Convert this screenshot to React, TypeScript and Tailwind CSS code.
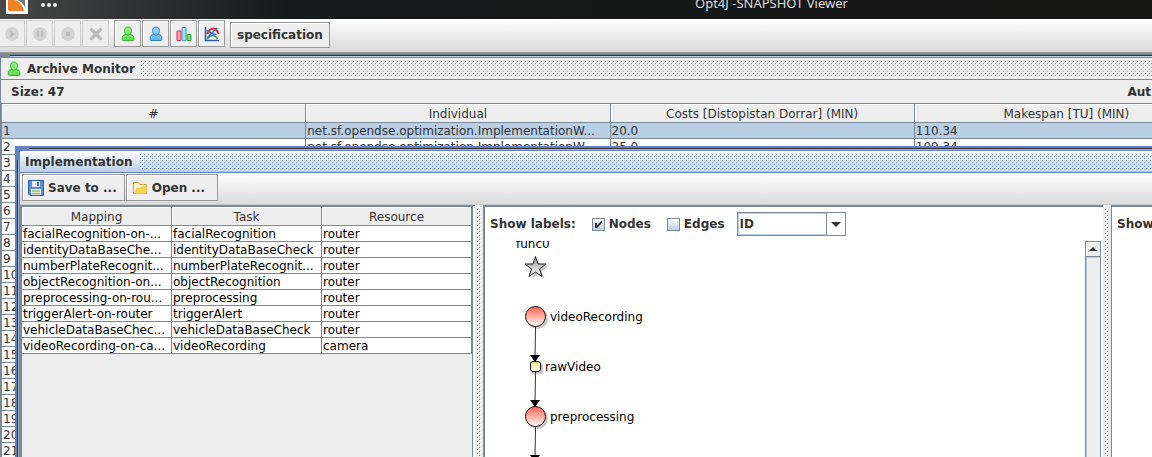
import type { ReactNode } from "react";
import { useState } from "react";

const GREY_DOTS =
  "bg-[conic-gradient(at_1px_1px,transparent_75%,#7a8a99_0),conic-gradient(at_1px_1px,transparent_75%,#7a8a99_0),conic-gradient(at_1px_1px,transparent_75%,#ffffff_0),conic-gradient(at_1px_1px,transparent_75%,#ffffff_0)] bg-[size:4px_4px] bg-[position:0_0,2px_2px,1px_1px,3px_3px]";
const BLUE_DOTS =
  "bg-[conic-gradient(at_1px_1px,transparent_75%,#6382bf_0),conic-gradient(at_1px_1px,transparent_75%,#6382bf_0),conic-gradient(at_1px_1px,transparent_75%,#ffffff_0),conic-gradient(at_1px_1px,transparent_75%,#ffffff_0)] bg-[size:4px_4px] bg-[position:0_0,2px_2px,1px_1px,3px_3px]";

function Person({ id, light, mid, dark }: { id: string; light: string; mid: string; dark: string }) {
  return (
    <svg width="14" height="16" viewBox="0 0 14 16" aria-hidden="true">
      <defs>
        <linearGradient id={id} x1="0" y1="0" x2="0" y2="1">
          <stop offset="0" stopColor={light} />
          <stop offset="1" stopColor={mid} />
        </linearGradient>
      </defs>
      <path
        d="M7 1C4.700 1 3.500 2.600 3.500 4.500C3.500 6 4.200 7.200 5 8.500C2.500 8.800 1.200 9.800 1.200 11.500V13.500Q1.200 14.500 2.200 14.500H11.800Q12.800 14.500 12.800 13.500V11.500C12.800 9.800 11.500 8.800 9 8.500C9.800 7.200 10.500 6 10.500 4.500C10.500 2.600 9.300 1 7 1Z"
        fill={`url(#${id})`}
        stroke={dark}
      />
      <path d="M5 8.500Q7 10.200 9 8.500" fill="none" stroke={dark} />
    </svg>
  );
}

function BarsIcon() {
  return (
    <svg width="16" height="16" viewBox="0 0 16 16" aria-hidden="true">
      <rect x="1" y="5" width="4" height="9.500" rx="0.500" fill="#ffa8b4" stroke="#e0203f" />
      <rect x="6" y="1.500" width="4" height="13" rx="0.500" fill="#a8e0ff" stroke="#3a98e0" />
      <rect x="11" y="8.500" width="4" height="6" rx="0.500" fill="#7be06a" stroke="#22a322" />
    </svg>
  );
}

function PlotIcon() {
  return (
    <svg width="16" height="16" viewBox="0 0 16 16" fill="none" strokeWidth="1.500" aria-hidden="true">
      <path d="M1.500 1V14.500H15" stroke="#2c5aa0" />
      <path d="M3 13C5 10.500 7 9.500 9 9.500C11 9.500 12.500 11 13.500 13" stroke="#3f9a3f" />
      <path d="M3 8C5 4 7 2.500 9.500 2.500C12 2.500 13.500 5 14.500 8" stroke="#ee2222" strokeWidth="2" />
      <path d="M2.500 4.500C6 5 8 9 12.500 8.500M3 12L13 2" stroke="#2f6fd0" />
    </svg>
  );
}

function MediaIcon({ kind }: { kind: "play" | "pause" | "stop" }) {
  return (
    <svg width="16" height="16" viewBox="0 0 16 16" aria-hidden="true">
      <circle cx="8" cy="8" r="7" fill="#d3d3d3" />
      {kind === "play" && <path d="M6.500 4.500L10.500 8L6.500 11.500Z" fill="#b9b9b9" />}
      {kind === "pause" && <path d="M5 5H7V11H5ZM9 5H11V11H9Z" fill="#bdbdbd" />}
      {kind === "stop" && <path d="M6 6H10V10H6Z" fill="#b9b9b9" />}
    </svg>
  );
}

function ToolButton({ label, disabled, children }: { label: string; disabled?: boolean; children: ReactNode }) {
  return (
    <button
      type="button"
      aria-label={label}
      disabled={disabled}
      className="flex h-[27px] w-[27px] items-center justify-center border border-[#999999] bg-[#eeeeee] shadow-[inset_1px_1px_0_#ffffff] disabled:border-[#cccccc] disabled:shadow-none"
    >
      {children}
    </button>
  );
}

function SaveIcon() {
  return (
    <svg width="16" height="16" viewBox="0 0 16 16" aria-hidden="true">
      <path d="M0.500 0.500H15.500V15.500H2L0.500 14Z" fill="#5b8ed6" stroke="#2f62ad" />
      <path d="M4 1H12V7H4Z" fill="#e6eef8" />
      <path d="M9 2H11V6H9Z" fill="#4a7cc4" />
      <path d="M3 9H13V15H3Z" fill="#ffffff" />
      <path d="M4 11H12M4 13.500H12" stroke="#7fbd6a" strokeWidth="1.500" />
    </svg>
  );
}

function FolderIcon() {
  return (
    <svg width="16" height="16" viewBox="0 0 16 16" aria-hidden="true">
      <path d="M1.500 13.500V2.500H6.500L8 4.500H14.500V13.500Z" fill="#fff4d0" stroke="#e0a04a" />
      <path d="M3.500 13.500L4.500 8.500H8L9.500 7H14.500V13.500Z" fill="#f8d84a" stroke="#eebb50" />
    </svg>
  );
}

function HeadCell({ children }: { children: ReactNode }) {
  return (
    <th className="h-[19px] overflow-hidden border-r border-b border-[#7a8a99] bg-[#eeeeee] p-0 pt-px text-center leading-4 font-normal whitespace-nowrap text-[#333333] shadow-[inset_1px_1px_0_#ffffff]">
      {children}
    </th>
  );
}

function Cell({ children }: { children?: ReactNode }) {
  return (
    <td className="h-4 overflow-hidden border-r border-b border-[#7a8a99] p-0 pt-0.5 pl-px leading-[13px] whitespace-nowrap">
      {children}
    </td>
  );
}

const INDIVIDUAL = "net.sf.opendse.optimization.ImplementationW...";
const archive = Array.from({ length: 21 }, (_, i) => ({
  n: i + 1,
  individual: i < 2 ? INDIVIDUAL : "",
  costs: ["20.0", "25.0"][i] ?? "",
  makespan: ["110.34", "109.34"][i] ?? "",
}));

const mappings = [
  ["facialRecognition-on-...", "facialRecognition", "router"],
  ["identityDataBaseChe...", "identityDataBaseCheck", "router"],
  ["numberPlateRecognit...", "numberPlateRecognit...", "router"],
  ["objectRecognition-on...", "objectRecognition", "router"],
  ["preprocessing-on-rou...", "preprocessing", "router"],
  ["triggerAlert-on-router", "triggerAlert", "router"],
  ["vehicleDataBaseChec...", "vehicleDataBaseCheck", "router"],
  ["videoRecording-on-ca...", "videoRecording", "camera"],
];

function CheckBox({ label, initial }: { label: string; initial: boolean }) {
  const [on, setOn] = useState(initial);
  return (
    <label className="flex items-center gap-1">
      <span className="relative flex">
        <input
          type="checkbox"
          checked={on}
          onChange={(e) => setOn(e.target.checked)}
          className="h-[13px] w-[13px] appearance-none border border-[#7a8a99] bg-linear-to-b from-white to-[#b8cfe5]"
        />
        {on && (
          <svg className="pointer-events-none absolute top-0 left-0" width="13" height="13" viewBox="0 0 13 13" aria-hidden="true">
            <path d="M3 5H5V7.500L9 3H10V5L5 10H3Z" fill="#333333" />
          </svg>
        )}
      </span>
      {label}
    </label>
  );
}

function Divider() {
  return (
    <div className="w-2 shrink-0 bg-[#eeeeee] px-0.5 pt-1">
      <div className={`h-full ${GREY_DOTS}`} />
    </div>
  );
}

function Graph() {
  return (
    <div className="relative min-h-0 flex-1 overflow-hidden">
      <svg className="absolute top-0 left-0" width="160" height="300" viewBox="0 0 160 300" aria-hidden="true">
        <defs>
          <linearGradient id="task" x1="0" y1="0" x2="0" y2="1">
            <stop offset="0.100" stopColor="#ff705c" />
            <stop offset="1" stopColor="#ffffff" />
          </linearGradient>
          <linearGradient id="message" x1="0" y1="0" x2="0" y2="1">
            <stop offset="0" stopColor="#f0e68c" />
            <stop offset="1" stopColor="#ffffff" />
          </linearGradient>
          <linearGradient id="star" x1="0" y1="0" x2="0" y2="1">
            <stop offset="0" stopColor="#909090" />
            <stop offset="1" stopColor="#ffffff" />
          </linearGradient>
        </defs>
        <g fill="#c8c8c8">
          <path d="M53 18L55.500 25.500H63.500L57 30.500L59.500 38L53 33.500L46.500 38L49 30.500L42.500 25.500H50.500Z" />
          <circle cx="52.500" cy="77.500" r="10.500" />
          <rect x="47" y="122" width="11" height="11" rx="2" />
          <circle cx="52.500" cy="177.500" r="10.500" />
        </g>
        <path d="M50.500 86L50 120M50.500 131L50 165M50.500 186L50 220" stroke="#333333" />
        <path d="M45 114H55L50 121ZM45 159H55L50 166ZM45 214H55L50 221Z" fill="#000000" />
        <path
          d="M50.500 15.500L53 23H61L54.500 28L57 35.500L50.500 31L44 35.500L46.500 28L40 23H48Z"
          fill="url(#star)"
          stroke="#222222"
        />
        <circle cx="50.500" cy="75.500" r="10" fill="url(#task)" stroke="#111111" />
        <rect x="45.500" y="120.500" width="10" height="10" rx="2.500" fill="url(#message)" stroke="#111111" />
        <circle cx="50.500" cy="175.500" r="10" fill="url(#task)" stroke="#111111" />
      </svg>
      <span className="absolute -top-1 left-[31px] leading-[15px]">func0</span>
      <span className="absolute top-[69px] left-[65px] leading-[15px]">videoRecording</span>
      <span className="absolute top-[119px] left-[60px] leading-[15px]">rawVideo</span>
      <span className="absolute top-[169px] left-[65px] leading-[15px]">preprocessing</span>
    </div>
  );
}

function ImplementationWindow() {
  return (
    <section className="absolute top-[93px] right-0 bottom-0 left-[15px] flex flex-col overflow-hidden bg-[#6382bf] pt-[5px] pl-[5px] text-black">
      <div className="absolute top-0.5 right-0 left-3.5 h-0.5 border-t border-[#333333] bg-[#a3b8cc]" />
      <div className="absolute top-3.5 bottom-0 left-0.5 w-0.5 border-l border-[#333333] bg-[#a3b8cc]" />
      <header className="flex h-[22px] shrink-0 items-center gap-2 border-b border-[#6382bf] bg-linear-to-b from-white to-[#b8cfe5] pl-[5px] font-bold text-[#333333]">
        <h2>Implementation</h2>
        <div className={`h-4 flex-1 ${BLUE_DOTS}`} />
      </header>
      <div className="flex h-8 shrink-0 items-start gap-px border-b border-[#cccccc] bg-linear-to-b from-white to-[#dadada] pt-px pl-0.5 font-bold text-[#333333]">
        <button type="button" className="flex h-[27px] items-center gap-1 border border-[#999999] bg-[#eeeeee] px-[5px] pr-[7px] shadow-[inset_1px_1px_0_#ffffff]">
          <SaveIcon />
          Save to ...
        </button>
        <button type="button" className="flex h-[27px] items-center gap-1 border border-[#999999] bg-[#eeeeee] pr-3 pl-[5px] shadow-[inset_1px_1px_0_#ffffff]">
          <FolderIcon />
          Open ...
        </button>
      </div>
      <div className="flex min-h-0 flex-1 bg-[#eeeeee]">
        <div className="w-[453px] shrink-0 border-t-2 border-r border-l-2 border-[#7a8a99]">
          <table className="w-full table-fixed border-separate border-spacing-0">
            <thead>
              <tr>
                <HeadCell>Mapping</HeadCell>
                <HeadCell>Task</HeadCell>
                <HeadCell>Resource</HeadCell>
              </tr>
            </thead>
            <tbody className="bg-white">
              {mappings.map((row) => (
                <tr key={row[0]}>
                  {row.map((text, i) => (
                    <Cell key={i}>{text}</Cell>
                  ))}
                </tr>
              ))}
            </tbody>
          </table>
        </div>
        <div className="w-0.5 shrink-0 border-t border-[#7a8a99] bg-white" />
        <Divider />
        <div className="flex min-w-0 flex-1 flex-col border-t-2 border-l-2 border-[#7a8a99] bg-white">
          <div className="flex h-[34px] shrink-0 items-center gap-4 pl-[5px] font-bold text-[#333333]">
            <span>Show labels:</span>
            <CheckBox label="Nodes" initial />
            <CheckBox label="Edges" initial={false} />
            <span className="relative -ml-1 flex">
              <select
                aria-label="Label attribute"
                className="h-6 w-[109px] appearance-none border border-[#7a8a99] bg-white pl-0.5 font-bold shadow-[inset_0_0_0_1px_#b8cfe5] outline-none"
              >
                <option>ID</option>
              </select>
              <span className="pointer-events-none absolute top-px right-px bottom-px flex w-[19px] items-center justify-center border-l border-[#7a8a99] bg-white">
                <svg width="10" height="5" viewBox="0 0 10 5" aria-hidden="true">
                  <path d="M0 0H10L5 5Z" fill="#333333" />
                </svg>
              </span>
            </span>
          </div>
          <div className="flex min-h-0 flex-1">
            <Graph />
            <div className="mr-0.5 flex w-4 shrink-0 flex-col border-t border-r border-l border-[#7a8a99] bg-[#eeeeee]">
              <button
                type="button"
                aria-label="Scroll up"
                className="flex h-[15px] w-full shrink-0 items-center justify-center border-b border-[#7a8a99] shadow-[inset_1px_1px_0_#ffffff]"
              >
                <svg width="8" height="4" viewBox="0 0 8 4" aria-hidden="true">
                  <path d="M0 4H8L4 0Z" fill="#333333" />
                </svg>
              </button>
              <div className="flex-1 border-t border-l border-[#b8cfe5]" />
            </div>
          </div>
        </div>
        <Divider />
        <div className="w-[41px] shrink-0 overflow-hidden border-t-2 border-l border-[#7a8a99] bg-white pl-[5px] font-bold text-[#333333]">
          <div className="flex h-[34px] items-center">Show</div>
        </div>
      </div>
    </section>
  );
}

export default function App() {
  return (
    <div className="flex h-screen flex-col overflow-hidden bg-[#7a8a99] font-['DejaVu_Sans',sans-serif] text-xs text-[#333333]">
      <header className="relative flex h-[19px] shrink-0 items-start overflow-hidden bg-linear-to-r from-[#484848] via-[#16191a] via-25% to-[#161715]">
        <svg className="ml-1.5" width="52" height="14" viewBox="0 0 52 14" aria-hidden="true">
          <path d="M0 0H22V14H0Z" fill="#ffffff" />
          <path d="M2 0H9C14 2 17 6 18 11H4Q2 11 2 9Z" fill="#f08228" />
          <path d="M12 0H19V7Q16 2 12 0Z" fill="#777777" />
          <g fill="#f0f0f0">
            <circle cx="37" cy="5" r="2" />
            <circle cx="43" cy="5" r="2" />
            <circle cx="49" cy="5" r="2" />
          </g>
        </svg>
        <h1 className="absolute -top-1.5 left-[695px] font-['Noto_Sans',sans-serif] text-[13px] leading-[18px] whitespace-nowrap text-[#dddddd]">
          Opt4J -SNAPSHOT Viewer
        </h1>
      </header>
      <div className="flex h-[34px] shrink-0 items-start border-b border-[#999999] bg-linear-to-b from-white to-[#dadada] pt-px">
        <div className="-ml-0.5 flex gap-px">
          <ToolButton label="Play" disabled>
            <MediaIcon kind="play" />
          </ToolButton>
          <ToolButton label="Pause" disabled>
            <MediaIcon kind="pause" />
          </ToolButton>
          <ToolButton label="Stop" disabled>
            <MediaIcon kind="stop" />
          </ToolButton>
          <ToolButton label="Terminate" disabled>
            <svg width="16" height="16" viewBox="0 0 16 16" aria-hidden="true">
              <path d="M3.500 3.500L12.500 12.500M12.500 3.500L3.500 12.500" stroke="#bdbdbd" strokeWidth="3.500" strokeLinecap="round" />
            </svg>
          </ToolButton>
        </div>
        <div className="ml-[5px] flex gap-px">
          <ToolButton label="Archive">
            <Person id="person-tool" light="#9cf08c" mid="#5ae04a" dark="#35b52c" />
          </ToolButton>
          <ToolButton label="Population">
            <Person id="person-blue" light="#9cd4f8" mid="#60b4f0" dark="#2e80c4" />
          </ToolButton>
          <ToolButton label="Statistics">
            <BarsIcon />
          </ToolButton>
          <ToolButton label="Convergence">
            <PlotIcon />
          </ToolButton>
        </div>
        <button type="button" className="mt-0.5 ml-[5px] h-[26px] border border-[#999999] bg-[#eeeeee] px-1.5 font-bold shadow-[inset_1px_1px_0_#ffffff]">
          specification
        </button>
      </div>
      <main className="relative flex min-h-0 flex-1 flex-col overflow-hidden pt-[5px] pl-px">
        <div className="absolute top-0.5 right-0 left-2.5 h-0.5 border-t border-[#333333] bg-[#b8cfe5]" />
        <section className="flex min-h-0 flex-1 flex-col bg-[#eeeeee]">
          <header className="flex h-[22px] shrink-0 items-center gap-1.5 border-b border-[#7a8a99] pl-1.5 font-bold">
            <Person id="person-title" light="#9cf08c" mid="#5ae04a" dark="#35b52c" />
            <h2>Archive Monitor</h2>
            <div className={`h-4 flex-1 ${GREY_DOTS}`} />
          </header>
          <div className="flex h-[23px] shrink-0 items-center justify-between pr-px pl-2.5 font-bold">
            <span>Size: 47</span>
            <span>Aut</span>
          </div>
          <div className="-mr-[67px] min-h-0 flex-1 overflow-hidden border-t border-l border-[#7a8a99]">
            <table className="w-full table-fixed border-separate border-spacing-0">
              <thead>
                <tr>
                  <HeadCell>#</HeadCell>
                  <HeadCell>Individual</HeadCell>
                  <HeadCell>Costs [Distopistan Dorrar] (MIN)</HeadCell>
                  <HeadCell>Makespan [TU] (MIN)</HeadCell>
                </tr>
              </thead>
              <tbody className="bg-white">
                {archive.map((row) => (
                  <tr key={row.n} className="first:bg-[#b8cfe5]">
                    <Cell>{row.n}</Cell>
                    <Cell>{row.individual}</Cell>
                    <Cell>{row.costs}</Cell>
                    <Cell>{row.makespan}</Cell>
                  </tr>
                ))}
              </tbody>
            </table>
          </div>
        </section>
        <ImplementationWindow />
      </main>
    </div>
  );
}
